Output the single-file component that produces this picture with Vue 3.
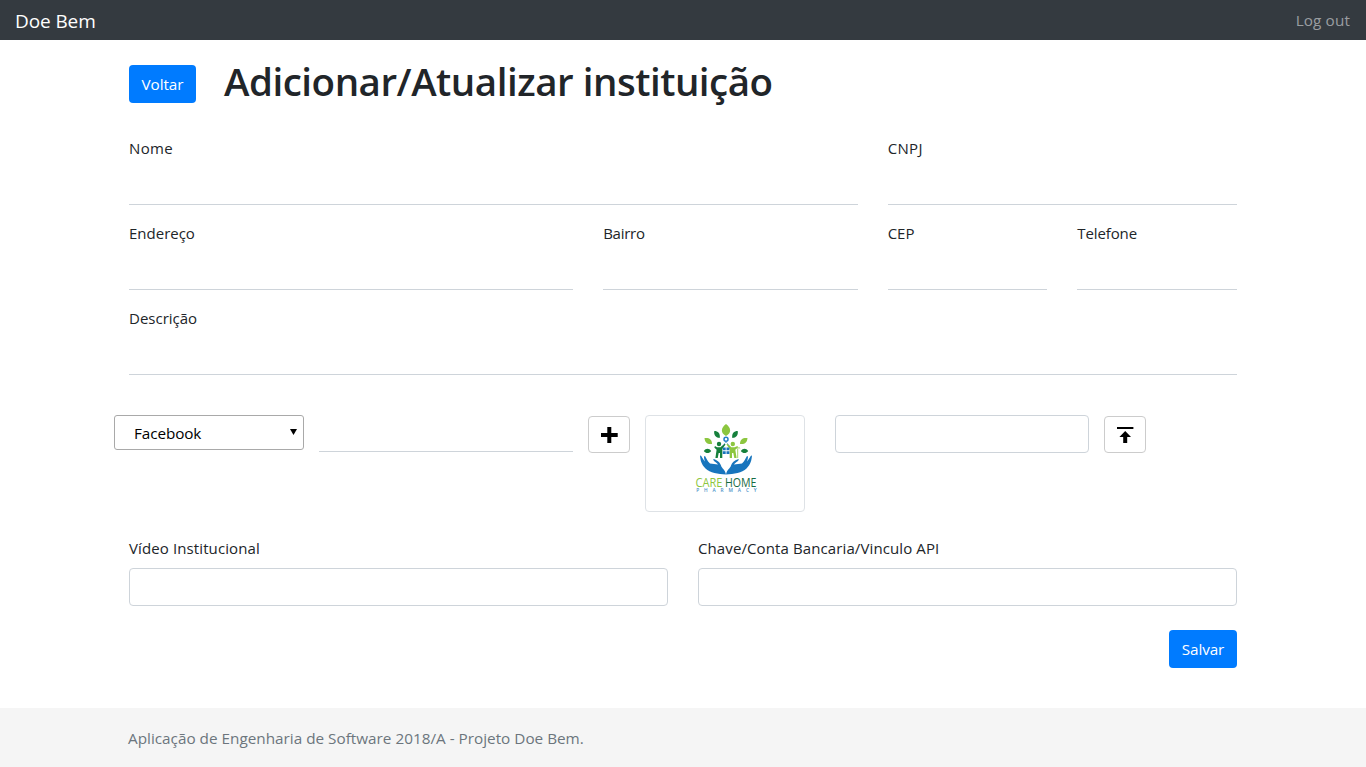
<script setup>
import { ref } from 'vue'

const rows = [
  [
    { label: 'Nome', span: 8, fit: 'wide' },
    { label: 'CNPJ', span: 4, fit: 'wide' },
  ],
  [
    { label: 'Endereço', span: 5, fit: '' },
    { label: 'Bairro', span: 3, fit: 'tight' },
    { label: 'CEP', span: 2, fit: '' },
    { label: 'Telefone', span: 2, fit: 'snug' },
  ],
  [{ label: 'Descrição', span: 12, fit: '' }],
]
const network = ref('Facebook')
</script>

<template>
  <div class="page">
    <header class="navbar">
      <a class="brand">Doe Bem</a>
      <a class="logout">Log out</a>
    </header>

    <main class="container">
      <div class="heading">
        <button class="btn">Voltar</button>
        <h1>Adicionar/Atualizar instituição</h1>
      </div>

      <div v-for="(row, i) in rows" :key="i" class="row">
        <div v-for="f in row" :key="f.label" class="field" :class="'span-' + f.span">
          <label :class="f.fit">{{ f.label }}</label>
          <input class="line" type="text" />
        </div>
      </div>

      <div class="media">
        <div class="select">
          <span>{{ network }}</span>
          <svg width="7" height="6" viewBox="0 0 7 6"><path d="M0 0H7L3.5 6Z" /></svg>
        </div>
        <div class="field"><input class="line" type="text" /></div>
        <button class="icon-btn">
          <svg width="18" height="17" viewBox="0 0 18 17"><path d="M7.300 1h4v6h6.400v4h-6.400v6h-4v-6H1V7h6.300z" /></svg>
        </button>
        <div class="thumb-col">
          <div class="thumb">
            <svg class="logo" width="74" height="76" viewBox="-4 0 74 76">
              <g fill="#8cc63f">
                <path d="M33 0C27.500 4 27.500 9 33 12C38.500 9 38.500 4 33 0Z" />
                <path d="M11.500 14C12 18.500 14 20.500 19 20C19 15 16 13.500 11.500 14Z" />
                <path d="M54.500 14C50 13.500 47 15 47 20C52 20.500 54 18.500 54.500 14Z" />
              </g>
              <g fill="#16803c">
                <path d="M21.300 7C20.500 11 23 14 26.700 14C27.500 9.500 25 7 21.300 7Z" />
                <path d="M44.700 7C41 7 38.500 9.500 39.300 14C43 14 45.500 11 44.700 7Z" />
                <path d="M10.800 27C13 24 16 24 18.200 27C16 29.700 13 29.700 10.800 27Z" />
                <path d="M47.800 27C50 24 53 24 55.200 27C53 29.700 50 29.700 47.800 27Z" />
                <circle cx="26" cy="20" r="2.200" />
                <path d="M22 22L24 23.300H27.500L31.500 19.500L32.500 20.500L29.300 25V34H27V29H25.700L24.700 34H22.400L23.600 25.800L21.300 23.500Z" />
              </g>
              <g fill="#8cc63f">
                <circle cx="39.800" cy="20" r="2.200" />
                <path d="M34.500 19.500L38.300 23.300H41.500L44.500 22L45 23.500L42.300 25.800L43.600 34H41.300L40.300 29H39V34H36.700V25L33.500 20.500Z" />
                <path d="M44.700 34V24.500Q46 22.500 47.200 24.500" fill="none" stroke="#8cc63f" stroke-width=".8" />
              </g>
              <circle cx="33" cy="15.300" r="2" fill="none" stroke="#2481c8" stroke-width="1.500" />
              <path d="M29.500 21.500L33 18L36.500 21.500" fill="none" stroke="#8bb7d8" stroke-width=".9" />
              <path d="M29.800 23.500h2.900v2.800h-2.900zM33.500 23.500h2.900v2.800h-2.900zM29.800 27.200h2.900v2.800h-2.900zM33.500 27.200h2.900v2.800h-2.900z" fill="#1874bd" />
              <g fill="#1775bd">
                <path d="M7 31.500C8.500 31 9.500 35 12 37.500C11 34.500 10.500 32 12 32C13.500 34 14 37 17 39.500L25 40.500C23 38 19.500 36.500 20.500 35C25 36.500 27 38.500 28 41.500C29 45 32 45 33 50.500C25 50 17 49 12.500 44.500C8 40 7.500 36 7 31.500Z" />
                <path d="M59 31.500C57.500 31 56.500 35 54 37.500C55 34.500 55.500 32 54 32C52.500 34 52 37 49 39.500L41 40.500C43 38 46.500 36.500 45.500 35C41 36.500 39 38.500 38 41.500C37 45 34 45 33 50.500C41 50 49 49 53.500 44.500C58 40 58.500 36 59 31.500Z" />
              </g>
              <text x="2.500" y="62.700" class="care" fill="#8cc63f" textLength="27" lengthAdjust="spacingAndGlyphs">CARE</text>
              <text x="32" y="62.700" class="care home" fill="#176b43" textLength="31.500" lengthAdjust="spacingAndGlyphs">HOME</text>
              <text x="3.200" y="67.600" class="pharmacy" fill="#4a92c8" textLength="60.500">PHARMACY</text>
            </svg>
          </div>
        </div>
        <div class="field"><input class="box" type="text" /></div>
        <button class="icon-btn">
          <svg width="18" height="17" viewBox="0 0 18 17"><path d="M1 1h16.400v2H1zM9.200 5l5.800 6h-3.800v6h-4v-6H3.400z" /></svg>
        </button>
      </div>

      <div class="row last">
        <div class="field span-6">
          <label class="long">Vídeo Institucional</label>
          <input class="box" type="text" />
        </div>
        <div class="field span-6">
          <label class="long">Chave/Conta Bancaria/Vinculo API</label>
          <input class="box" type="text" />
        </div>
      </div>

      <div class="actions"><button class="btn save">Salvar</button></div>
    </main>

    <footer>Aplicação de Engenharia de Software 2018/A - Projeto Doe Bem.</footer>
  </div>
</template>

<style>
html,
body {
  margin: 0;
  background: #fff;
}
</style>

<style scoped>
* {
  box-sizing: border-box;
}
.page {
  height: 767px;
  display: flex;
  flex-direction: column;
  overflow: hidden;
  font: 400 15.3px/24px "Open Sans", "Noto Sans", sans-serif;
  color: #212529;
}
.navbar {
  height: 40px;
  flex: none;
  display: flex;
  align-items: center;
  justify-content: space-between;
  padding: 0 16px 0 15px;
  background: #343a40;
}
.brand {
  padding-top: 1px;
  color: #fff;
  font-size: 19px;
  letter-spacing: -0.1px;
}
.logout {
  color: #9a9da0;
  letter-spacing: 0.12px;
}
.container {
  width: 1138px;
  flex: 1;
  margin: 0 auto;
}
.heading {
  display: flex;
  height: 96px;
  padding: 25px 15px 0;
}
h1 {
  margin: -8px 0 0 28px;
  font-size: 38.5px;
  line-height: 48px;
  font-weight: 600;
  letter-spacing: -0.48px;
  white-space: nowrap;
}
.btn {
  width: 67px;
  height: 38px;
  padding: 0;
  border: 0;
  border-radius: 4px;
  background: #007bff;
  color: #fff;
  font: inherit;
  letter-spacing: -0.1px;
}
.btn.save {
  width: 68px;
}
.row {
  display: grid;
  grid-template-columns: repeat(12, 1fr);
  height: 85px;
}
.field {
  padding: 0 15px;
}
.span-2 { grid-column: span 2; }
.span-3 { grid-column: span 3; }
.span-4 { grid-column: span 4; }
.span-5 { grid-column: span 5; }
.span-6 { grid-column: span 6; }
.span-8 { grid-column: span 8; }
.span-12 { grid-column: span 12; }
label {
  display: block;
  height: 24px;
  margin-bottom: 8px;
  white-space: nowrap;
  font-size: 15px;
}
.wide { letter-spacing: 0.35px; }
.tight { letter-spacing: -0.25px; }
.snug { letter-spacing: -0.12px; }
.long { letter-spacing: 0.11px; }
input {
  display: block;
  width: 100%;
  margin: 0;
  background: #fff;
  outline: 0;
}
.line {
  height: 37px;
  border: 0;
  border-bottom: 1px solid #ced4da;
}
.box {
  height: 38px;
  border: 1px solid #ced4da;
  border-radius: 4px;
}
.media {
  display: grid;
  grid-template-columns: 190px 284px 42px 190px 284px 42px;
  align-items: start;
  height: 121px;
  margin-top: 24px;
}
.select {
  display: flex;
  align-items: center;
  justify-content: space-between;
  height: 35px;
  padding: 0 6px 0 19px;
  border: 1px solid #a9a9a9;
  border-radius: 3px;
  color: #000;
  letter-spacing: -0.1px;
}
.select svg {
  margin-top: -2px;
}
.icon-btn {
  display: flex;
  align-items: center;
  justify-content: center;
  width: 42px;
  height: 37px;
  margin-top: 1px;
  padding: 0;
  border: 1px solid #ccc;
  border-radius: 4px;
  background: #fff;
}
.thumb-col {
  padding: 0 15px;
}
.thumb {
  display: flex;
  justify-content: center;
  height: 97px;
  padding-top: 8px;
  border: 1px solid #dee2e6;
  border-radius: 4px;
}
.logo {
  margin-left: 2px;
  overflow: visible;
}
.care {
  font: 400 12px "Open Sans", sans-serif;
}
.home {
  font-weight: 500;
}
.pharmacy {
  font: 600 4.8px "Open Sans", sans-serif;
}
.last {
  height: 94px;
}
.actions {
  display: flex;
  justify-content: flex-end;
  padding-right: 15px;
}
footer {
  height: 59px;
  flex: none;
  padding: 18px 128px 0;
  background: #f5f5f5;
  color: #6c757d;
}
</style>
